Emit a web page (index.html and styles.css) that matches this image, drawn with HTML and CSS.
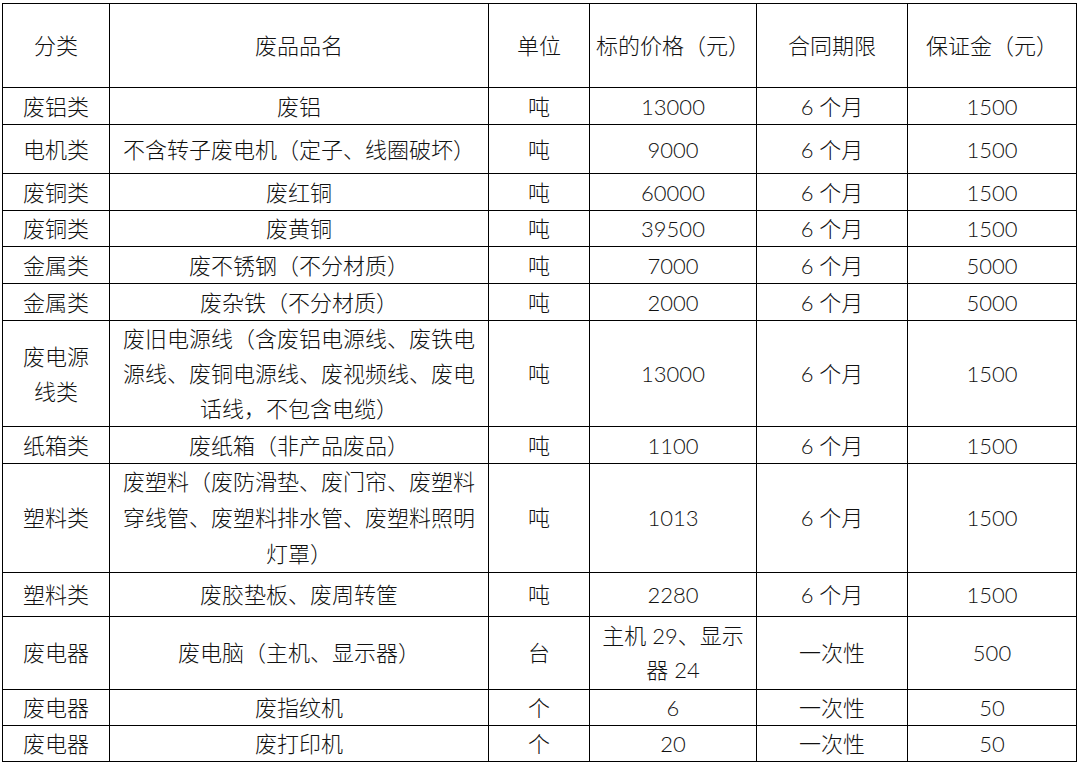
FILE: index.html
```html
<!DOCTYPE html>
<html lang="zh-CN">
<head>
<meta charset="utf-8">
<title>废品价格表</title>
<link rel="stylesheet" href="styles.css">
</head>
<body>
<table class="sheet">
  <colgroup>
    <col class="c1"><col class="c2"><col class="c3"><col class="c4"><col class="c5"><col class="c6">
  </colgroup>
  <tr class="r84"><td>分类</td><td>废品品名</td><td>单位</td><td>标的价格（元）</td><td>合同期限</td><td>保证金（元）</td></tr>
  <tr class="r37"><td>废铝类</td><td>废铝</td><td>吨</td><td>13000</td><td>6 个月</td><td>1500</td></tr>
  <tr class="r49"><td>电机类</td><td>不含转子废电机（定子、线圈破坏）</td><td>吨</td><td>9000</td><td>6 个月</td><td>1500</td></tr>
  <tr class="r37"><td>废铜类</td><td>废红铜</td><td>吨</td><td>60000</td><td>6 个月</td><td>1500</td></tr>
  <tr class="r36"><td>废铜类</td><td>废黄铜</td><td>吨</td><td>39500</td><td>6 个月</td><td>1500</td></tr>
  <tr class="r37"><td>金属类</td><td>废不锈钢（不分材质）</td><td>吨</td><td>7000</td><td>6 个月</td><td>5000</td></tr>
  <tr class="r37"><td>金属类</td><td>废杂铁（不分材质）</td><td>吨</td><td>2000</td><td>6 个月</td><td>5000</td></tr>
  <tr class="r105"><td>废电源<br>线类</td><td>废旧电源线（含废铝电源线、废铁电<br>源线、废铜电源线、废视频线、废电<br>话线，不包含电缆）</td><td>吨</td><td>13000</td><td>6 个月</td><td>1500</td></tr>
  <tr class="r37"><td>纸箱类</td><td>废纸箱（非产品废品）</td><td>吨</td><td>1100</td><td>6 个月</td><td>1500</td></tr>
  <tr class="r109"><td>塑料类</td><td>废塑料（废防滑垫、废门帘、废塑料<br>穿线管、废塑料排水管、废塑料照明<br>灯罩）</td><td>吨</td><td>1013</td><td>6 个月</td><td>1500</td></tr>
  <tr class="r44"><td>塑料类</td><td>废胶垫板、废周转筐</td><td>吨</td><td>2280</td><td>6 个月</td><td>1500</td></tr>
  <tr class="r73"><td>废电器</td><td>废电脑（主机、显示器）</td><td>台</td><td>主机 29、显示<br>器 24</td><td>一次性</td><td>500</td></tr>
  <tr class="r36"><td>废电器</td><td>废指纹机</td><td>个</td><td>6</td><td>一次性</td><td>50</td></tr>
  <tr class="r36"><td>废电器</td><td>废打印机</td><td>个</td><td>20</td><td>一次性</td><td>50</td></tr>
</table>
</body>
</html>
```

FILE: styles.css
```css
html, body {
  margin: 0;
  padding: 0;
  background: #ffffff;
}

body {
  padding: 3px 0 0 2px;
  font-family: "Lato", "Noto Sans CJK SC", sans-serif;
  font-size: 22px;
  font-weight: 300;
  color: #111111;
}

.sheet {
  border-collapse: collapse;
  table-layout: fixed;
  width: 1075px;
}

.c1 { width: 107px; }
.c2 { width: 379px; }
.c3 { width: 101px; }
.c4 { width: 167px; }
.c5 { width: 151px; }
.c6 { width: 169px; }

.sheet td {
  border: 1px solid #000000;
  padding: 0 4px;
  text-align: center;
  vertical-align: middle;
  line-height: 35px;
  white-space: nowrap;
}

.r84 { height: 84px; }
.r37 { height: 37px; }
.r36 { height: 36px; }
.r49 { height: 49px; }
.r44 { height: 44px; }
.r73 { height: 73px; }
.r105 { height: 105px; }
.r109 { height: 109px; }

.r73 td { line-height: 34px; }
.r105 td { line-height: 35px; }
.r109 td { line-height: 36px; }
```
